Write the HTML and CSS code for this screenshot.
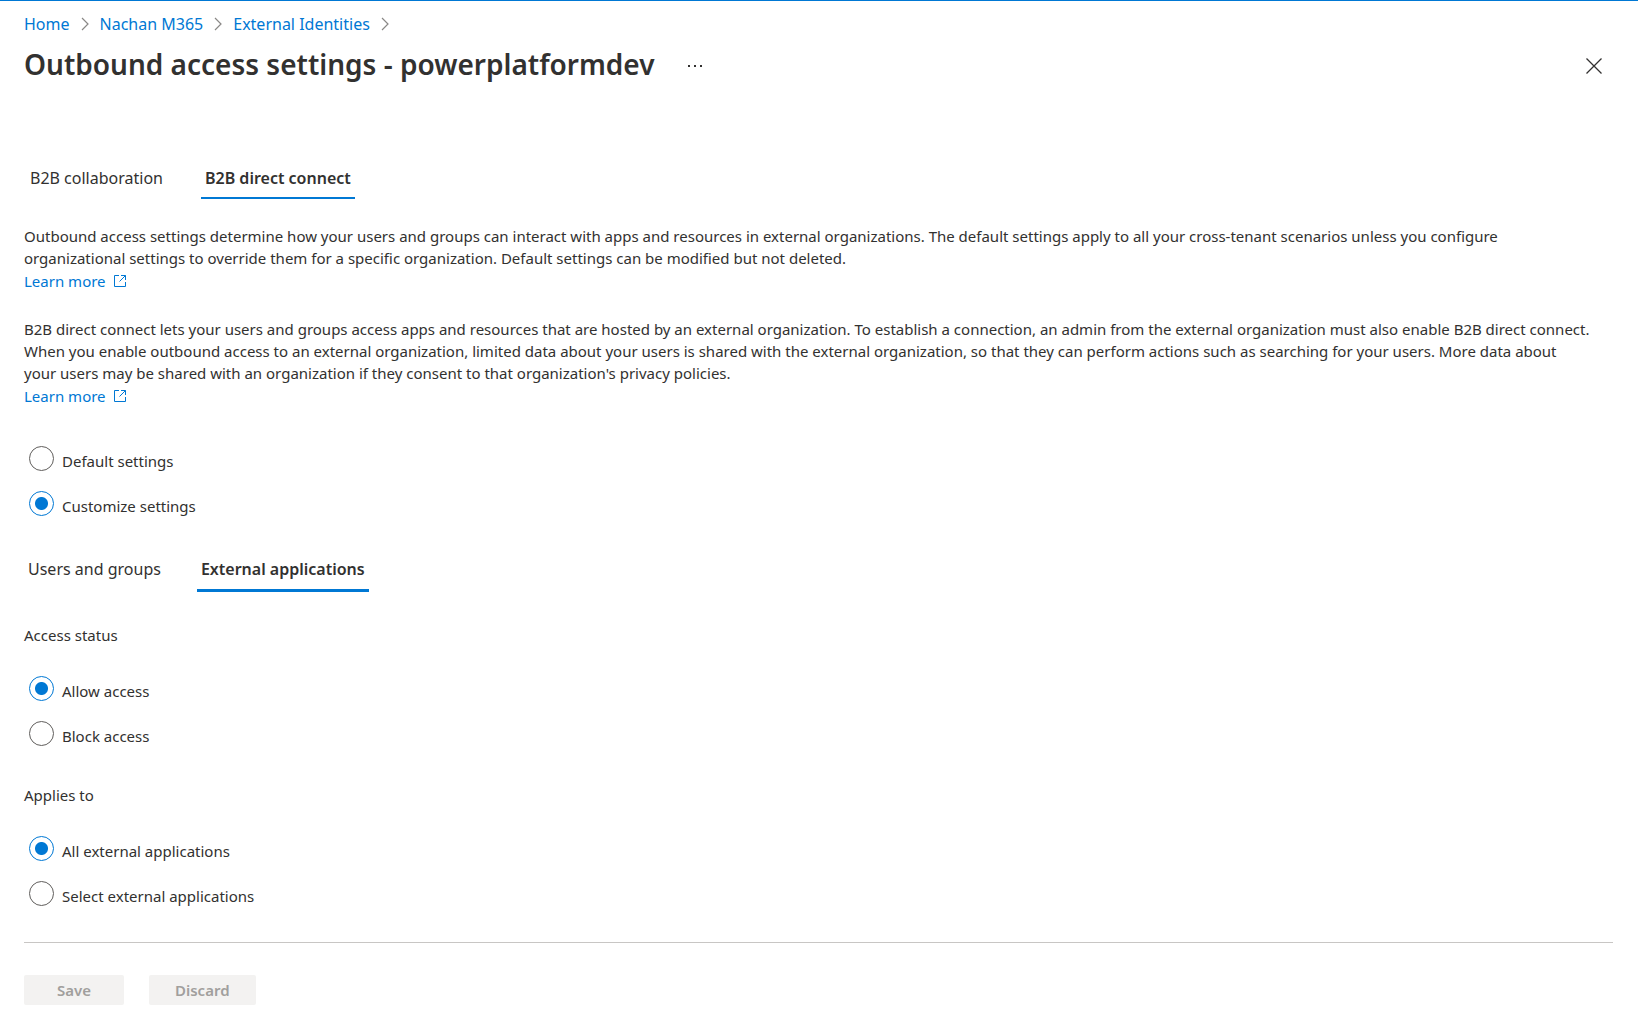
FILE: index.html
```html
<!DOCTYPE html>
<html lang="en">
<head>
<meta charset="utf-8">
<meta name="viewport" content="width=device-width, initial-scale=1">
<title>Outbound access settings - powerplatformdev</title>
<link rel="stylesheet" href="styles.css">
</head>
<body>
<svg width="0" height="0" class="sprite" aria-hidden="true">
  <symbol id="chevron" viewBox="0 0 8 14"><path d="M1 1l6 6-6 6" fill="none" stroke="currentColor" stroke-width="1.2"/></symbol>
  <symbol id="external" viewBox="0 0 12 12"><path d="M5 .5H.5v11h11V7M7 .5h4.500v4.500M11.500.5l-6 6" fill="none" stroke="currentColor"/></symbol>
</svg>
<div class="blade">
  <header class="header">
    <nav class="breadcrumb" aria-label="Breadcrumb">
      <a href="#">Home</a><svg class="chevron"><use href="#chevron"/></svg>
      <a href="#">Nachan M365</a><svg class="chevron"><use href="#chevron"/></svg>
      <a href="#">External Identities</a><svg class="chevron"><use href="#chevron"/></svg>
    </nav>
    <div class="title-row">
      <h1>Outbound access settings - powerplatformdev</h1>
      <button class="icon-button" type="button" aria-label="More">
        <svg width="14" height="2" viewBox="0 0 14 2"><path d="M0 0h2v2H0zM6 0h2v2H6zM12 0h2v2h-2z" fill="currentColor"/></svg>
      </button>
      <button class="icon-button close" type="button" aria-label="Close">
        <svg width="16" height="16" viewBox="0 0 16 16"><path d="M.5.5l15 15M15.500.5l-15 15" fill="none" stroke="currentColor" stroke-width="1.3"/></svg>
      </button>
    </div>
  </header>

  <main>
    <div class="tabs" role="tablist">
      <button class="tab" type="button" role="tab" aria-selected="false">B2B collaboration</button>
      <button class="tab" type="button" role="tab" aria-selected="true">B2B direct connect</button>
    </div>

    <section class="intro">
      <p>Outbound access settings determine how your users and groups can interact with apps and resources in external organizations. The default settings apply to all your cross-tenant scenarios unless you configure organizational settings to override them for a specific organization. Default settings can be modified but not deleted.</p>
      <a class="learn" href="#">Learn more <svg class="external"><use href="#external"/></svg></a>
    </section>
    <section class="intro">
      <p>B2B direct connect lets your users and groups access apps and resources that are hosted by an external organization. To establish a connection, an admin from the external organization must also enable B2B direct connect. When you enable outbound access to an external organization, limited data about your users is shared with the external organization, so that they can perform actions such as searching for your users. More data about your&nbsp;users may be shared with an organization if they consent to that organization's privacy policies.</p>
      <a class="learn" href="#">Learn more <svg class="external"><use href="#external"/></svg></a>
    </section>

    <div class="options mode" role="radiogroup" aria-label="Settings mode">
      <label class="option"><input type="radio" name="mode"><span>Default settings</span></label>
      <label class="option"><input type="radio" name="mode" checked><span>Customize settings</span></label>
    </div>

    <div class="tabs inner" role="tablist">
      <button class="tab" type="button" role="tab" aria-selected="false">Users and groups</button>
      <button class="tab" type="button" role="tab" aria-selected="true">External applications</button>
    </div>

    <fieldset>
      <legend>Access status</legend>
      <div class="options">
        <label class="option"><input type="radio" name="access" checked><span>Allow access</span></label>
        <label class="option"><input type="radio" name="access"><span>Block access</span></label>
      </div>
    </fieldset>
    <fieldset>
      <legend>Applies to</legend>
      <div class="options">
        <label class="option"><input type="radio" name="apps" checked><span>All external applications</span></label>
        <label class="option"><input type="radio" name="apps"><span>Select external applications</span></label>
      </div>
    </fieldset>
  </main>

  <footer class="actions">
    <button type="button" disabled>Save</button>
    <button type="button" disabled>Discard</button>
  </footer>
</div>
</body>
</html>
```

FILE: styles.css
```css
* { box-sizing: border-box; }
body {
  margin: 0;
  background: #fff;
  color: #323130;
  font: 15px/22px "Segoe UI", "Noto Sans", "Open Sans", sans-serif;
}
.sprite { position: absolute; }
a { color: #0078d4; text-decoration: none; }
a:hover { text-decoration: underline; }
button { font: inherit; color: inherit; }

.blade {
  border-top: 1px solid #0078d4;
  padding: 12px 25px 24px 24px;
}
.breadcrumb {
  display: flex;
  align-items: center;
  gap: 11px;
  font-size: 16px;
}
.chevron { width: 8px; height: 14px; color: #8a8886; }

.title-row {
  display: flex;
  align-items: center;
  margin-top: 9px;
}
h1 { margin: 0; font-size: 28px; line-height: 40px; font-weight: 600; }
.icon-button {
  display: flex;
  align-items: center;
  justify-content: center;
  width: 40px;
  height: 40px;
  margin-left: 20px;
  padding: 4px 0 0;
  border: 0;
  background: none;
}
.icon-button.close { width: 38px; margin-left: auto; }

.tabs {
  display: flex;
  gap: 34px;
  margin-top: 77px;
  font-size: 16px;
}
.tab {
  padding: 6px 4px 8px;
  border: 0;
  border-bottom: 2px solid transparent;
  background: none;
}
.tabs .tab:first-child { padding-left: 6px; }
.tab[aria-selected="true"] { border-color: #0078d4; font-weight: 600; }
.tabs.inner { margin-top: 31px; gap: 32px; }
.inner .tab { border-bottom-width: 3px; padding-bottom: 9px; }
.tabs.inner .tab:first-child { padding-left: 4px; }

.intro { margin-top: 26px; }
.intro p { margin: 0; padding-right: 16px; }
.learn { display: flex; align-items: center; width: max-content; gap: 8px; line-height: 24px; }
.intro + .intro { margin-top: 25px; }
.external { width: 12px; height: 12px; }

.options { display: flex; flex-direction: column; gap: 15px; }
.mode { margin-top: 38px; }
.option { display: flex; align-items: center; height: 30px; padding-left: 5px; gap: 8px; }
.option input {
  appearance: none;
  width: 25px;
  height: 25px;
  margin: 0 0 5px;
  border: 1px solid #605e5c;
  border-radius: 50%;
}
.option input:checked {
  border-color: #0078d4;
  background: radial-gradient(circle, #0078d4 6px, transparent 7px);
}

fieldset { margin: 32px 0 0; padding: 0; border: 0; }
fieldset + fieldset { margin-top: 33px; }
legend { padding: 0; margin: 0 0 30px; }

.actions {
  display: flex;
  gap: 25px;
  margin-top: 31px;
  padding-top: 32px;
  border-top: 1px solid #c8c6c4;
}
.actions button {
  min-width: 100px;
  height: 30px;
  padding: 0 26px;
  border: 0;
  border-radius: 2px;
  background: #f3f2f1;
  color: #a19f9d;
  font-weight: 600;
}
```
